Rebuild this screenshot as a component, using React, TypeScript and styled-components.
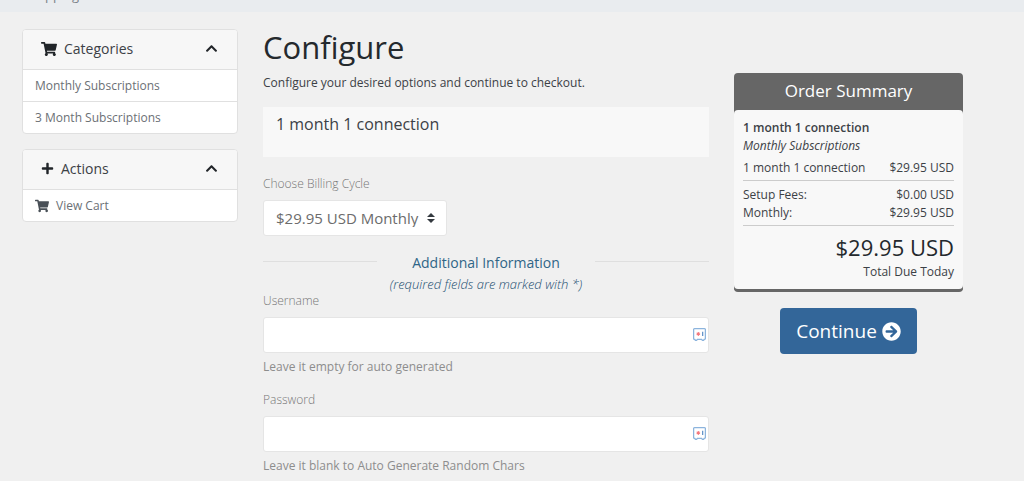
import React from "react";
import styled, { createGlobalStyle } from "styled-components";
import { FaShoppingCart, FaPlus, FaChevronUp, FaArrowCircleRight } from "react-icons/fa";

const GlobalStyle = createGlobalStyle`
  * { box-sizing: border-box; }
  body {
    margin: 0;
    background: #f0f0f0;
    color: #3c4146;
    font-family: "Open Sans", "Noto Sans", sans-serif;
    font-size: 12px;
    line-height: 18px;
  }
  h1, h2, h3, p, ul, dl, dd { margin: 0; padding: 0; font-weight: 400; }
  a { color: inherit; text-decoration: none; }
`;

const Breadcrumb = styled.nav`
  display: flex;
  align-items: flex-end;
  height: 12px;
  padding: 0 22px 8px;
  overflow: hidden;
  background: #e9ecef;
  color: #7b8288;
  font-size: 13px;
`;

const Page = styled.div`
  display: grid;
  grid-template-columns: 216fr 446fr 229fr;
  align-items: start;
  gap: 25px;
  padding: 17px 61px 0 22px;
`;

const Sidebar = styled.aside`
  display: grid;
  gap: 15px;
`;

const Panel = styled.section`
  overflow: hidden;
  border: 1px solid #e0e0e0;
  border-radius: 4px;
  background: #fff;
`;

const PanelHeader = styled.h3`
  display: flex;
  align-items: center;
  gap: 7px;
  height: 39px;
  padding: 0 19px 2px 18px;
  background: #f7f7f7;
  color: #3c4146;
  font-size: 14px;

  svg { color: #212529; }
`;

const Toggle = styled.button`
  display: flex;
  margin-left: auto;
  padding: 0;
  border: 0;
  background: none;
  font-size: 13px;
`;

const PanelLink = styled.a`
  display: flex;
  align-items: center;
  gap: 7px;
  height: 32px;
  padding: 0 12px;
  border-top: 1px solid #e0e0e0;
  color: #6b7075;

  svg { color: #495057; }
`;

const Title = styled.h1`
  color: #24292d;
  font-size: 31px;
  line-height: 36px;
`;

const Intro = styled.p`
  margin: 9px 0 15px;
`;

const Product = styled.section`
  min-height: 50px;
  margin-bottom: 18px;
  padding: 8px 13px;
  background: #f8f8f8;
  font-size: 16px;
`;

const Field = styled.div`
  display: grid;
  justify-items: start;
  margin-bottom: 15px;
  color: #8d8d8d;
`;

const Label = styled.label`
  margin-bottom: 7px;
  color: #777;
  font-weight: 300;
`;

const Help = styled.p`
  margin-top: 5px;
`;

const SelectWrap = styled.div`
  position: relative;
  color: #343a40;

  svg {
    position: absolute;
    top: 13px;
    right: 12px;
    pointer-events: none;
  }
`;

const Select = styled.select`
  appearance: none;
  height: 36px;
  padding: 0 27px 0 12px;
  border: 1px solid #e5e5e5;
  border-radius: 3px;
  background: #fff;
  color: #6c6c6c;
  font: inherit;
  font-size: 15px;
`;

const InputWrap = styled.div`
  position: relative;
  width: 100%;

  svg {
    position: absolute;
    top: 11px;
    right: 3px;
  }
`;

const Input = styled.input`
  display: block;
  width: 100%;
  height: 36px;
  padding: 0 28px 0 11px;
  border: 1px solid #e5e5e5;
  border-radius: 3px;
  background: #fff;
  font: inherit;
`;

const Divider = styled.div`
  display: flex;
  color: #2f6587;
  text-align: center;

  &::before, &::after {
    content: "";
    flex: 1;
    height: 1px;
    margin-top: 10px;
    background: #dfdfdf;
  }
`;

const DividerText = styled.div`
  padding: 3px 13px 0;
`;

const DividerTitle = styled.h2`
  font-size: 14px;
`;

const Required = styled.em`
  display: block;
  margin-top: 4px;
  color: #1d4f70;
  font-size: 13px;
  font-weight: 300;
  line-height: 16px;
`;

const SummaryColumn = styled.aside`
  display: grid;
  justify-items: center;
  gap: 16px;
  padding-top: 44px;
`;

const Summary = styled.section`
  width: 100%;
  border-bottom: 3px solid #666;
  border-radius: 4px;
  background: #666;
`;

const SummaryTitle = styled.h2`
  padding-bottom: 2px;
  color: #fff;
  font-size: 17px;
  line-height: 35px;
  text-align: center;
`;

const SummaryBody = styled.div`
  padding: 9px 9px 8px;
  border-radius: 4px;
  background: #f8f8f8;
`;

const Name = styled.strong`
  display: block;
  font-weight: 600;
`;

const Group = styled.em`
  display: block;
  margin-bottom: 4px;
`;

const Lines = styled.dl`
  padding-bottom: 3px;
  margin-bottom: 5px;
  border-bottom: 1px solid #ccc;
`;

const Line = styled.div`
  display: flex;
  justify-content: space-between;
`;

const Total = styled.div`
  text-align: right;
`;

const Amount = styled.div`
  color: #24292d;
  font-size: 22px;
  line-height: 32px;
`;

const Continue = styled.button`
  display: flex;
  align-items: center;
  gap: 5px;
  height: 46px;
  padding: 0 16px;
  border: 0;
  border-radius: 4px;
  background: #336699;
  color: #fff;
  font: inherit;
  font-size: 19px;
`;

const VaultIcon = () => (
  <svg width="13" height="13" viewBox="0 0 13 13" fill="none" aria-hidden="true">
    <path
      d="M1.5.7h10a.9.9 0 0 1 .9.9v8.9a.8.8 0 0 1-.8.8h-.4l-.6 1H9.400l-.8-1H4.400l-.8 1H2.400l-.6-1h-.4a.8.8 0 0 1-.8-.8V1.600A.9.9 0 0 1 1.500.7z"
      stroke="#8cb4dd"
      strokeWidth="1.3"
    />
    <path d="M5.300 3.900v4M3.600 4.900l3.400 2M7 4.900 3.600 6.900" stroke="#f4777d" strokeWidth="1.100" />
    <path d="M9.700 3.800v4.200" stroke="#4a82c0" strokeWidth="1.100" />
  </svg>
);

type TextFieldProps = { id: string; label: string; help: string; type?: string };

const TextField = ({ id, label, help, type = "text" }: TextFieldProps) => (
  <Field>
    <Label htmlFor={id}>{label}</Label>
    <InputWrap>
      <Input id={id} type={type} aria-describedby={`${id}-help`} />
      <VaultIcon />
    </InputWrap>
    <Help id={`${id}-help`}>{help}</Help>
  </Field>
);

export default function App() {
  return (
    <>
      <GlobalStyle />
      <Breadcrumb>
        <a href="#cart">Shopping Cart</a>
      </Breadcrumb>
      <Page>
        <Sidebar>
          <Panel>
            <PanelHeader>
              <FaShoppingCart size={16} /> Categories
              <Toggle aria-label="Collapse categories"><FaChevronUp /></Toggle>
            </PanelHeader>
            <PanelLink href="#monthly">Monthly Subscriptions</PanelLink>
            <PanelLink href="#quarterly">3 Month Subscriptions</PanelLink>
          </Panel>
          <Panel>
            <PanelHeader>
              <FaPlus size={13} /> Actions
              <Toggle aria-label="Collapse actions"><FaChevronUp /></Toggle>
            </PanelHeader>
            <PanelLink href="#cart"><FaShoppingCart size={14} /> View Cart</PanelLink>
          </Panel>
        </Sidebar>

        <main>
          <Title>Configure</Title>
          <Intro>Configure your desired options and continue to checkout.</Intro>
          <Product>1 month 1 connection</Product>
          <Field>
            <Label htmlFor="cycle">Choose Billing Cycle</Label>
            <SelectWrap>
              <Select id="cycle">
                <option>$29.95 USD Monthly</option>
              </Select>
              <svg width="8" height="10" viewBox="0 0 4 5" aria-hidden="true">
                <path fill="currentColor" d="M2 0L0 2h4zm0 5L0 3h4z" />
              </svg>
            </SelectWrap>
          </Field>
          <Divider>
            <DividerText>
              <DividerTitle>Additional Information</DividerTitle>
              <Required>(required fields are marked with *)</Required>
            </DividerText>
          </Divider>
          <TextField id="username" label="Username" help="Leave it empty for auto generated" />
          <TextField id="password" label="Password" type="password" help="Leave it blank to Auto Generate Random Chars" />
        </main>

        <SummaryColumn>
          <Summary>
            <SummaryTitle>Order Summary</SummaryTitle>
            <SummaryBody>
              <Name>1 month 1 connection</Name>
              <Group>Monthly Subscriptions</Group>
              <Lines>
                <Line><dt>1 month 1 connection</dt><dd>$29.95 USD</dd></Line>
              </Lines>
              <Lines>
                <Line><dt>Setup Fees:</dt><dd>$0.00 USD</dd></Line>
                <Line><dt>Monthly:</dt><dd>$29.95 USD</dd></Line>
              </Lines>
              <Total>
                <Amount>$29.95 USD</Amount>
                <div>Total Due Today</div>
              </Total>
            </SummaryBody>
          </Summary>
          <Continue>Continue <FaArrowCircleRight /></Continue>
        </SummaryColumn>
      </Page>
    </>
  );
}
